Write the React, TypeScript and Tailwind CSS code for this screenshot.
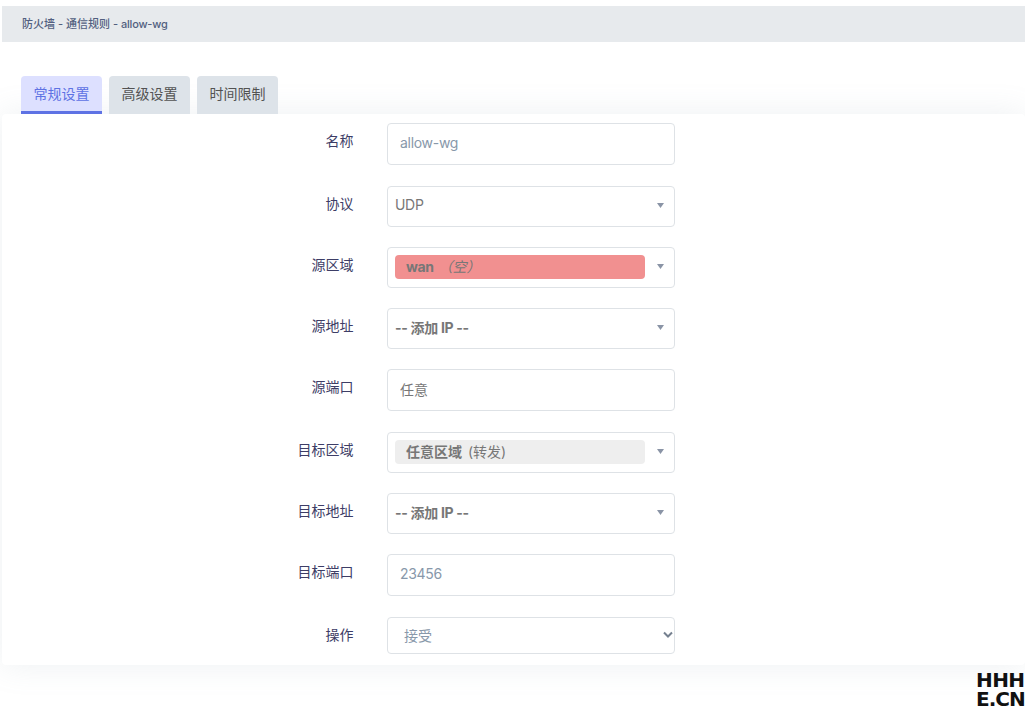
import { ReactNode } from 'react';

const boxClass = 'w-[288px] rounded-[4px] border border-[#dee2e6] bg-white';

function Caret() {
  return (
    <svg className="absolute right-[10px] top-[16px]" width="7" height="5" viewBox="0 0 8 6" preserveAspectRatio="none">
      <path d="M0 0h8L4 6z" fill="#8a94a6" />
    </svg>
  );
}

function Row({ label, mb, children }: { label: string; mb: string; children: ReactNode }) {
  return (
    <div className={`flex items-start ${mb}`}>
      <label className="w-[352px] pt-[8px] pr-[0.5px] text-right text-[14px] leading-[20px] text-[#3d3d66]">{label}</label>
      <div className="ml-[33px]">{children}</div>
    </div>
  );
}

function TextInput({ value, color }: { value: string; color: string }) {
  return (
    <input
      readOnly
      value={value}
      className={`${boxClass} block h-[42px] px-[12px] pb-[3px] text-[14px] outline-none ${color}`}
    />
  );
}

function DropBox({ children }: { children: ReactNode }) {
  return (
    <div className={`${boxClass} relative flex h-[41px] items-center pb-[2px] pl-[7px] text-[14px] text-[#777]`}>
      {children}
      <Caret />
    </div>
  );
}

function Badge({ bg, name, note }: { bg: string; name: ReactNode; note: ReactNode }) {
  return (
    <div className={`flex h-[24px] w-[250px] items-center rounded-[4px] pb-[1px] pl-[11px] text-[14px] ${bg}`}>
      {name}
      {note}
    </div>
  );
}

function AddIp() {
  return <b className="font-bold tracking-[-0.3px]">-- 添加 IP --</b>;
}

export default function App() {
  return (
    <div className="relative h-[707px] overflow-hidden bg-white pl-[2px] pt-[6px] font-['Inter','Noto_Sans_CJK_SC',sans-serif]">
      <div className="flex h-[36px] items-center bg-[#e7eaed] pl-[20px] text-[11px] font-medium text-[#525f7f]">
        防火墙 - 通信规则 - <span className="ml-[3px] tracking-[-0.2px]">allow-wg</span>
      </div>

      <div className="mt-[34px] flex gap-[7px] pl-[19px]">
        <div className="flex h-[38px] w-[81px] items-center justify-center rounded-t-[4px] border-b-[3px] border-[#5e72e4] bg-[#dde0ff] pb-[1px] text-[14px] text-[#5e72e4]">
          常规设置
        </div>
        <div className="flex h-[38px] w-[81px] items-center justify-center rounded-t-[4px] bg-[#dde3e9] pb-[4px] text-[14px] text-[#525252]">
          高级设置
        </div>
        <div className="flex h-[38px] w-[81px] items-center justify-center rounded-t-[4px] bg-[#dde3e9] pb-[4px] text-[14px] text-[#525252]">
          时间限制
        </div>
      </div>

      <div className="h-[551px] rounded-[4px] bg-white pt-[9px] shadow-[0_0_32px_rgba(136,152,170,0.15)]">
        <Row label="名称" mb="mb-[21px]">
          <TextInput value="allow-wg" color="text-[#8898aa] tracking-[-0.3px]" />
        </Row>
        <Row label="协议" mb="mb-[20px]">
          <DropBox>
            <span className="pb-[3px] tracking-[-0.3px]">UDP</span>
          </DropBox>
        </Row>
        <Row label="源区域" mb="mb-[20px]">
          <DropBox>
            <Badge
              bg="bg-[#f19090]"
              name={<b className="font-bold tracking-[-0.4px]">wan</b>}
              note={<span className="ml-[5px] italic text-[#777]">（空）</span>}
            />
          </DropBox>
        </Row>
        <Row label="源地址" mb="mb-[20px]">
          <DropBox>
            <AddIp />
          </DropBox>
        </Row>
        <Row label="源端口" mb="mb-[21px]">
          <TextInput value="任意" color="text-[#777]" />
        </Row>
        <Row label="目标区域" mb="mb-[20px]">
          <DropBox>
            <Badge
              bg="bg-[#eeeeee]"
              name={<b className="font-bold">任意区域</b>}
              note={<span className="ml-[6px] text-[#777]">(转发)</span>}
            />
          </DropBox>
        </Row>
        <Row label="目标地址" mb="mb-[20px]">
          <DropBox>
            <AddIp />
          </DropBox>
        </Row>
        <Row label="目标端口" mb="mb-[21px]">
          <TextInput value="23456" color="text-[#8898aa] tracking-[-0.3px]" />
        </Row>
        <Row label="操作" mb="mb-0">
          <div className="relative">
            <select className={`${boxClass} block h-[37px] appearance-none pl-[16px] text-[14px] text-[#8898aa] outline-none`}>
              <option>接受</option>
            </select>
            <svg className="absolute right-[2px] top-[14px]" width="10" height="8" viewBox="0 0 10 8">
              <path d="M1 1.5l4 4 4-4" fill="none" stroke="#75808f" strokeWidth="2" />
            </svg>
          </div>
        </Row>
      </div>

      <div className="absolute bottom-[-2px] right-0 flex w-[49px] flex-col font-['DejaVu_Sans',sans-serif] text-[20px] font-bold leading-[19px] text-[#111]">
        <span className="whitespace-nowrap tracking-[-0.6px]">HHH</span>
        <span className="whitespace-nowrap tracking-[-1px]">E.CN</span>
      </div>
    </div>
  );
}
